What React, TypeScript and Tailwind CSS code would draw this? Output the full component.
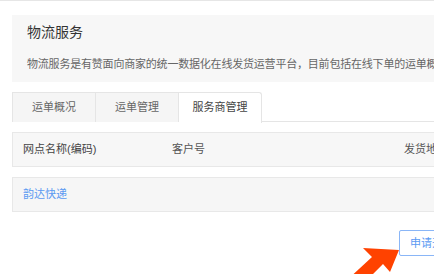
import React from "react";

export default function App() {
  const font = { fontFamily: '"Liberation Sans", "Noto Sans CJK SC", sans-serif' };
  return (
    <div
      className="relative w-[434px] h-[274px] overflow-hidden bg-white border-t border-[#e6e6e6]"
      style={font}
    >
      <div className="pl-[12px] w-[600px]">
        {/* header box */}
        <div className="mt-[14px] h-[67px] bg-[#f7f7f7] pl-[15px] pt-[9px]">
          <div className="text-[14px] leading-[16px] text-[#333] h-[16px]">物流服务</div>
          <div className="mt-[17px] text-[11px] leading-[14px] text-[#666] whitespace-nowrap tracking-[-0.2px]">
            物流服务是有赞面向商家的统一数据化在线发货运营平台，目前包括在线下单的运单概况、运单管理和服务商管理等功能
          </div>
        </div>

        {/* tabs */}
        <div className="mt-[10px] flex border-b border-[#e5e5e5] h-[30px]">
          <div className="w-[84px] h-[30px] flex items-center justify-center bg-[#f5f5f5] border border-[#e5e5e5] border-b-0 text-[11px] text-[#666]">
            运单概况
          </div>
          <div className="w-[83px] h-[30px] flex items-center justify-center bg-[#f5f5f5] border border-l-0 border-[#e5e5e5] border-b-0 text-[11px] text-[#666]">
            运单管理
          </div>
          <div className="w-[83px] h-[31px] flex items-center justify-center bg-white border border-l-0 border-[#e5e5e5] border-b-0 rounded-tr-[3px] text-[11px] text-[#444] pb-px">
            服务商管理
          </div>
        </div>

        {/* table header */}
        <div className="mt-[10px] h-[35px] flex items-center bg-[#f7f7f7] border border-[#e8e8e8] border-r-0 pl-[10px] text-[11px] text-[#444]">
          <div className="w-[149px]">网点名称(编码)</div>
          <div className="w-[232px] text-[#555]">客户号</div>
          <div className="text-[#555]">发货地址</div>
        </div>

        {/* row */}
        <div className="mt-[10px] h-[35px] flex items-center bg-[#f6f6f6] border border-[#e8e8e8] border-r-0 pl-[10px] text-[11px]">
          <span className="text-[#5b9af2]">韵达快递</span>
        </div>

        {/* button */}
        <div className="mt-[18px] flex">
          <div className="ml-[387px] h-[26px] px-[10px] flex items-center border border-[#8ab6f7] rounded-[2px] text-[11px] text-[#5b9af2] whitespace-nowrap bg-white">
            申请开通服务商
          </div>
        </div>
      </div>

      {/* arrow annotation */}
      <svg
        className="absolute left-0 top-0 pointer-events-none"
        width="434"
        height="274"
        viewBox="0 0 434 274"
      >
        <polygon
          points="399,249 363,247 372,256 346,280 362,284 383,263 390,271"
          fill="#ff4200"
        />
      </svg>
    </div>
  );
}
